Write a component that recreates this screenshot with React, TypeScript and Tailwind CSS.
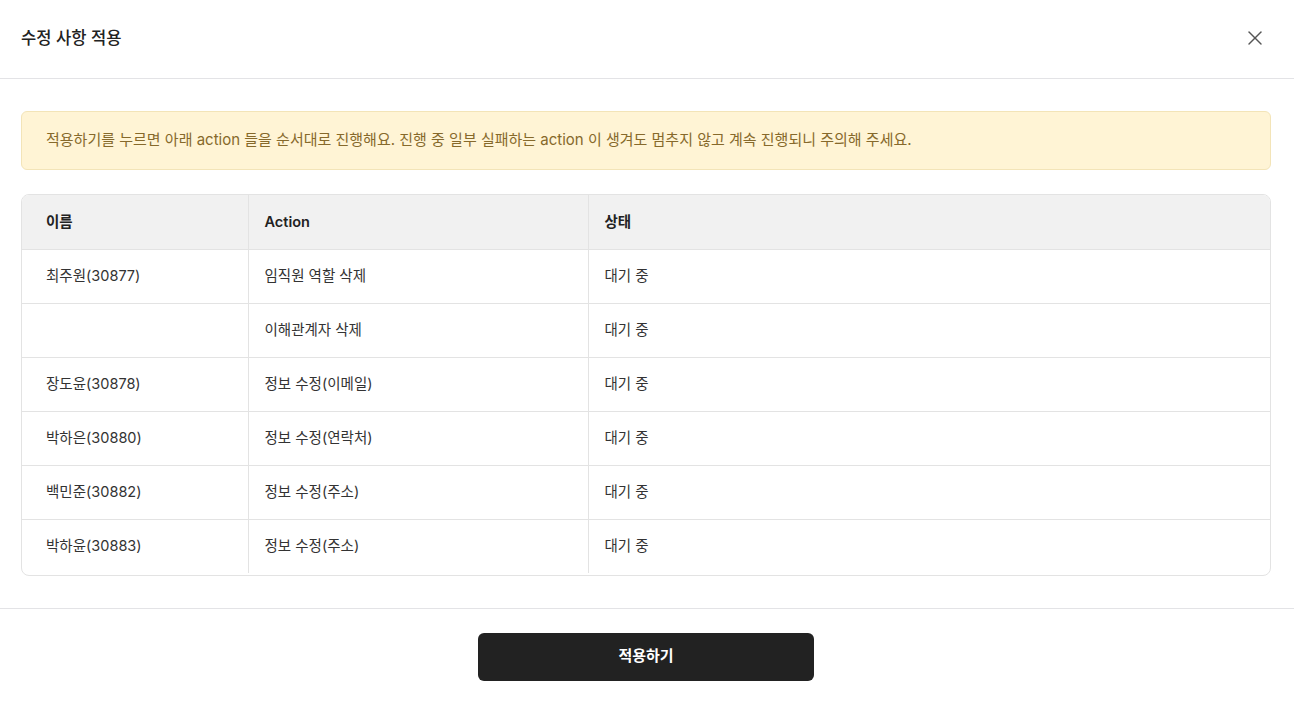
import { X } from "lucide-react";

const rows = [
  { name: "최주원(30877)", action: "임직원 역할 삭제", status: "대기 중" },
  { name: "", action: "이해관계자 삭제", status: "대기 중" },
  { name: "장도윤(30878)", action: "정보 수정(이메일)", status: "대기 중" },
  { name: "박하은(30880)", action: "정보 수정(연락처)", status: "대기 중" },
  { name: "백민준(30882)", action: "정보 수정(주소)", status: "대기 중" },
  { name: "박하윤(30883)", action: "정보 수정(주소)", status: "대기 중" },
];

export default function App() {
  return (
    <div
      className="w-full h-[704px] bg-white flex flex-col text-[#222]"
      style={{ fontFamily: 'Inter, "Noto Sans CJK KR", sans-serif' }}
    >
      <div className="h-[79px] shrink-0 flex items-center justify-between pl-[21px] pr-[23px] border-b border-[#e3e3e6]">
        <h2 className="text-[16.6px] font-medium -mt-[2px]">수정 사항 적용</h2>
        <button className="w-6 h-6 flex items-center justify-center text-[#555] mr-[4px] -mt-[2px]">
          <X size={26} strokeWidth={1.4} />
        </button>
      </div>

      <div className="flex-1 pl-[21px] pr-[23px] pt-[32px] pb-[32px] flex flex-col gap-[24px]">
        <div className="h-[59px] rounded-[6px] border border-[#f3e4b8] bg-[#fff4d5] flex items-center px-[24px] text-[15px] text-[#86692b]">
          적용하기를 누르면 아래 action 들을 순서대로 진행해요. 진행 중 일부 실패하는 action 이 생겨도 멈추지 않고 계속 진행되니 주의해 주세요.
        </div>

        <div className="rounded-[8px] border border-[#e3e3e3] overflow-hidden pb-[2px]">
          <table className="w-full border-collapse text-[14.5px]">
            <thead>
              <tr className="bg-[#f1f1f1] h-[54px] border-b border-[#e3e3e3]">
                <th className="w-[226px] text-left font-semibold pl-[24px] border-r border-[#e3e3e3]">이름</th>
                <th className="w-[340px] text-left font-semibold pl-[16px] border-r border-[#e3e3e3]">Action</th>
                <th className="text-left font-semibold pl-[16px]">상태</th>
              </tr>
            </thead>
            <tbody>
              {rows.map((r, i) => (
                <tr
                  key={i}
                  className={`h-[54px] ${i < rows.length - 1 ? "border-b border-[#e3e3e3]" : ""}`}
                >
                  <td className="pl-[24px] border-r border-[#e3e3e3] text-[#333]">{r.name}</td>
                  <td className="pl-[16px] border-r border-[#e3e3e3] text-[#333]">{r.action}</td>
                  <td className="pl-[16px] text-[#333]">{r.status}</td>
                </tr>
              ))}
            </tbody>
          </table>
        </div>
      </div>

      <div className="h-[96px] shrink-0 border-t border-[#e3e3e6] flex items-center justify-center pr-[2px]">
        <button className="w-[336px] h-[48px] rounded-[6px] bg-[#222] text-white text-[15px] font-semibold">
          적용하기
        </button>
      </div>
    </div>
  );
}
